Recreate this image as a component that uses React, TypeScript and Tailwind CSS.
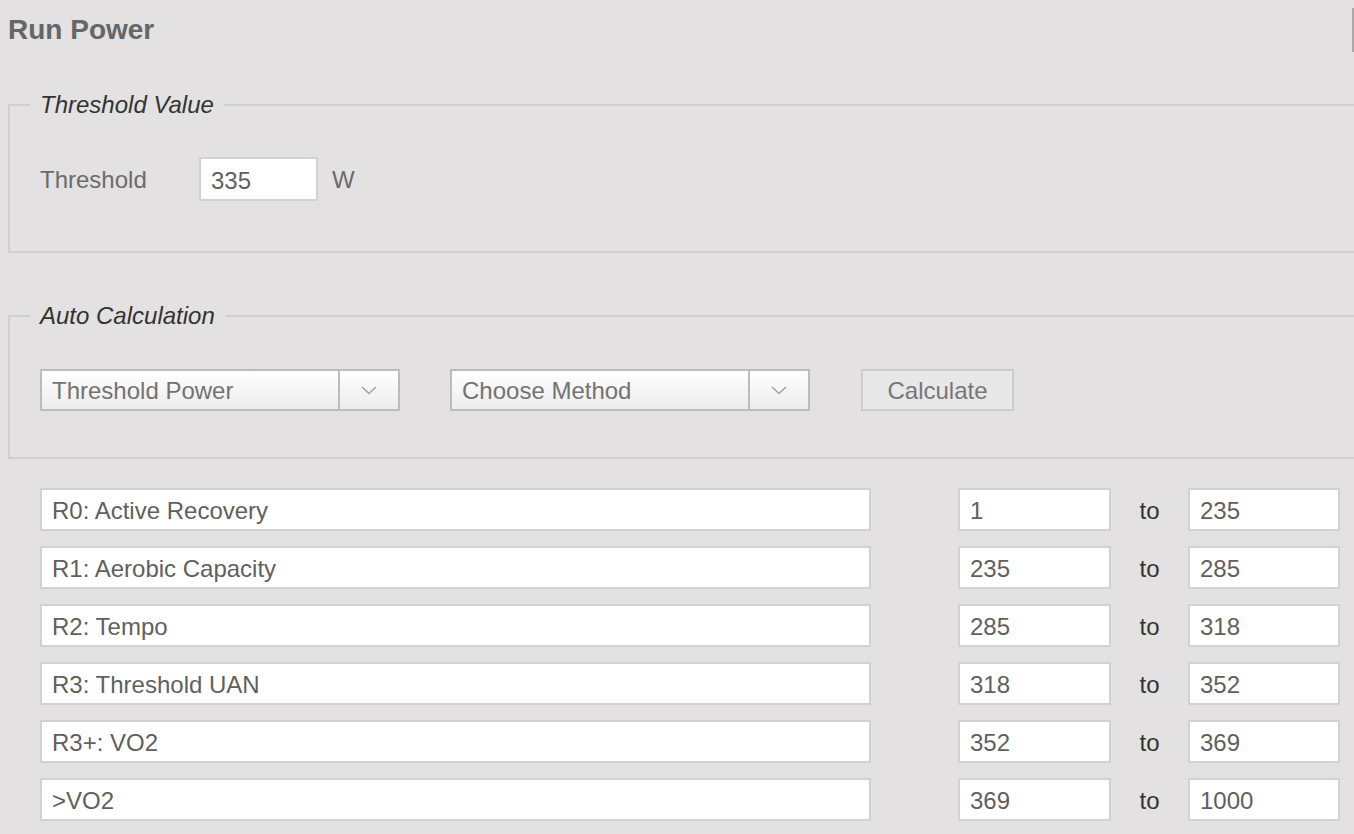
import React from 'react';

const zones = [
  { name: 'R0: Active Recovery', from: '1', to: '235' },
  { name: 'R1: Aerobic Capacity', from: '235', to: '285' },
  { name: 'R2: Tempo', from: '285', to: '318' },
  { name: 'R3: Threshold UAN', from: '318', to: '352' },
  { name: 'R3+: VO2', from: '352', to: '369' },
  { name: '>VO2', from: '369', to: '1000' },
];

const Chevron = () => (
  <svg width="16" height="9" viewBox="0 0 16 9" fill="none">
    <path d="M1 1l7 6.5L15 1" stroke="#a3a3a3" strokeWidth="1.6" />
  </svg>
);

const Select = ({ label }: { label: string }) => (
  <div className="flex h-[42px] w-[360px] border-2 border-[#bcbcbc] bg-gradient-to-b from-white to-[#ececec]">
    <div className="flex flex-1 items-center pl-[10px] pt-[2px] text-[24px] text-[#737373]">{label}</div>
    <div className="flex w-[60px] items-center justify-center border-l-2 border-[#bcbcbc]">
      <Chevron />
    </div>
  </div>
);

const Box = ({ value, className }: { value: string; className: string }) => (
  <div className={`flex items-center border-2 border-[#d2d2d2] bg-white pl-[10px] pt-[3px] text-[24px] text-[#5f5f5f] ${className}`}>
    {value}
  </div>
);

export default function App() {
  return (
    <div
      className="relative min-h-screen w-full overflow-hidden bg-[#e3e1e1] pl-[8px]"
      style={{ fontFamily: '"Liberation Sans", Arial, Helvetica, sans-serif' }}
    >
      <div className="absolute right-0 top-[8px] h-[44px] w-[2px] bg-[#a9a9a9]" />

      <h1 className="mt-[13px] text-[28px] font-bold leading-[34px] text-[#666666]">Run Power</h1>

      <fieldset className="mt-[45px] w-[1400px] border-2 border-[#cfcfcf] pb-[50px] pl-[30px] pt-[39px]">
        <legend className="-ml-[10px] px-[10px] text-[24px] italic leading-[26px] text-[#333333]">Threshold Value</legend>
        <div className="flex items-center">
          <span className="w-[159px] pt-[2px] text-[24px] text-[#6b6b6b]">Threshold</span>
          <Box value="335" className="h-[44px] w-[119px]" />
          <span className="ml-[14px] pt-[2px] text-[24px] text-[#6b6b6b]">W</span>
        </div>
      </fieldset>

      <fieldset className="mt-[50px] w-[1400px] border-2 border-[#cfcfcf] pb-[46px] pl-[30px] pt-[40px]">
        <legend className="-ml-[10px] px-[10px] text-[24px] italic leading-[26px] text-[#333333]">Auto Calculation</legend>
        <div className="flex items-center gap-[50px]">
          <Select label="Threshold Power" />
          <Select label="Choose Method" />
          <button className="ml-px flex h-[42px] w-[153px] items-center justify-center border-2 border-[#cdcdcd] bg-[#e9e8e8] pt-[2px] text-[24px] text-[#777777]">
            Calculate
          </button>
        </div>
      </fieldset>

      <div className="mt-[29px] flex flex-col gap-[15px] pl-[32px]">
        {zones.map((z) => (
          <div key={z.name} className="flex h-[43px] items-center">
            <Box value={z.name} className="h-[43px] w-[831px]" />
            <Box value={z.from} className="ml-[87px] h-[43px] w-[153px]" />
            <span className="w-[77px] pt-[3px] text-center text-[24px] text-[#333333]">to</span>
            <Box value={z.to} className="h-[43px] w-[152px]" />
          </div>
        ))}
      </div>
    </div>
  );
}
